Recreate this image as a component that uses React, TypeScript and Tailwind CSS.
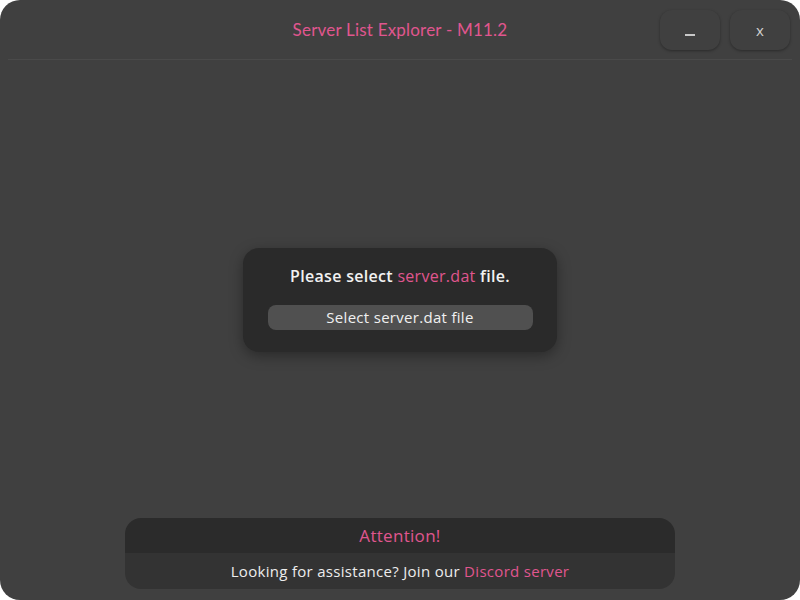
const font = { fontFamily: "'Open Sans', 'Noto Sans', sans-serif" };
const titleFont = { fontFamily: "Lato, 'Noto Sans', sans-serif" };

export default function App() {
  return (
    <div className="w-[800px] h-[600px] bg-white" style={font}>
      <div className="w-full h-full bg-[#404040] rounded-[20px] flex flex-col overflow-hidden">
        <div className="relative h-[60px] mx-2 border-b border-[#4a4a4a] flex items-center justify-center">
          <span className="text-[17px] text-[#e0568f] tracking-[0.2px]" style={titleFont}>Server List Explorer - M11.2</span>
          <div className="absolute right-[2px] top-[10px] flex gap-[10px]">
            <button className="w-[60px] h-[40px] rounded-xl bg-[#404040] shadow-[0_1px_3px_rgba(0,0,0,0.35)] flex items-center justify-center">
              <span className="block w-[10px] h-[2px] bg-[#c8c8c8] mt-[9px]"></span>
            </button>
            <button className="w-[60px] h-[40px] rounded-xl bg-[#404040] shadow-[0_1px_3px_rgba(0,0,0,0.35)] text-[#d0d0d0] text-[15px] flex items-center justify-center">
              x
            </button>
          </div>
        </div>
        <div className="flex-1 flex flex-col items-center">
          <div className="mt-[188px] w-[314px] h-[104px] bg-[#2a2a2a] rounded-2xl shadow-[0_4px_14px_rgba(0,0,0,0.35)] flex flex-col items-center">
            <p className="mt-[16px] text-[16px] font-semibold text-[#f2f2f2] tracking-[0.3px]">
              Please select <span className="text-[#e0568f] font-normal">server.dat</span> file.
            </p>
            <button className="mt-[17px] w-[265px] h-[25px] rounded-lg bg-[#505050] text-[15px] text-[#f0f0f0] leading-none tracking-[0.3px]">
              Select server.dat file
            </button>
          </div>
        </div>
        <div className="mx-auto mb-[11px] w-[550px] rounded-2xl overflow-hidden">
          <div className="h-[35px] bg-[#2b2b2b] flex items-center justify-center text-[17px] text-[#e0568f] tracking-[0.3px]">Attention!</div>
          <div className="h-[36px] bg-[#333333] flex items-center justify-center text-[15px] text-[#ededed] tracking-[0.3px]">
            Looking for assistance? Join our&nbsp;<span className="text-[#e0568f]">Discord server</span>
          </div>
        </div>
      </div>
    </div>
  );
}
